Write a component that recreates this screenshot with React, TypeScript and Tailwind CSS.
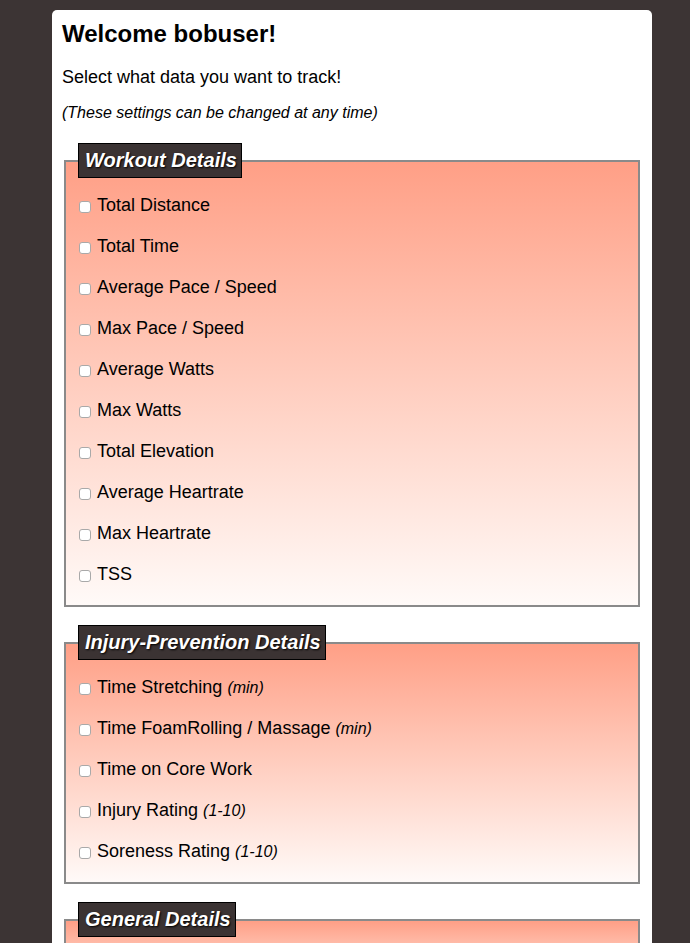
import React from 'react';

type Item = { label: string; unit?: string };

const workout: Item[] = [
  { label: 'Total Distance' },
  { label: 'Total Time' },
  { label: 'Average Pace / Speed' },
  { label: 'Max Pace / Speed' },
  { label: 'Average Watts' },
  { label: 'Max Watts' },
  { label: 'Total Elevation' },
  { label: 'Average Heartrate' },
  { label: 'Max Heartrate' },
  { label: 'TSS' },
];

const injury: Item[] = [
  { label: 'Time Stretching', unit: '(min)' },
  { label: 'Time FoamRolling / Massage', unit: '(min)' },
  { label: 'Time on Core Work' },
  { label: 'Injury Rating', unit: '(1-10)' },
  { label: 'Soreness Rating', unit: '(1-10)' },
];

const Section: React.FC<{ title: string; items: Item[] }> = ({ title, items }) => (
  <fieldset className="mx-[2px] mb-[18px] border-2 border-[#8a8a8a] px-[12px] bg-gradient-to-b from-[#ff9f86] to-[#fffaf8]">
    <legend className="h-[35px] bg-[#3b3333] border border-black pl-[6px] pr-[4px] text-white text-[20px] font-bold italic leading-[33px] [text-shadow:1px_1px_2px_#000]">
      {title}
    </legend>
    <div className="pt-[7px] pb-[10px] min-h-[60px]">
      {items.map((it) => (
        <label key={it.label} className="flex h-[41px] items-center text-[18px] text-black">
          <input
            type="checkbox"
            className="ml-[1px] mr-[6px] mt-[3px] h-[12px] w-[12px] appearance-none rounded-[3px] border border-[#a9a9a9] bg-white"
          />
          <span>{it.label}</span>
          {it.unit && <span className="ml-[5px] text-[16px] italic">{it.unit}</span>}
        </label>
      ))}
    </div>
  </fieldset>
);

const App: React.FC = () => {
  return (
    <div className="h-[943px] overflow-hidden bg-[#3c3434] pt-[10px] font-['Liberation_Sans',Arial,sans-serif]">
      <div className="ml-[52px] w-[600px] rounded-t-[5px] bg-white px-[10px] pb-[10px] min-h-[933px]">
        <h1 className="pt-[9px] text-[24px] font-bold leading-[30px] text-black">Welcome bobuser!</h1>
        <p className="mt-[18px] text-[18px] leading-[20px] text-black">Select what data you want to track!</p>
        <p className="mt-[16px] text-[16px] italic leading-[20px] text-black">(These settings can be changed at any time)</p>
        <div className="mt-[20px]">
          <Section title="Workout Details" items={workout} />
          <Section title="Injury-Prevention Details" items={injury} />
          <Section title="General Details" items={[]} />
        </div>
      </div>
    </div>
  );
};

export default App;
